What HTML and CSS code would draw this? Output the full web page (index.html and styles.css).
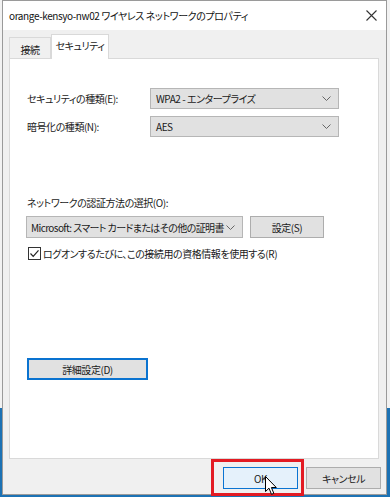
FILE: index.html
```
<!DOCTYPE html>
<html lang="ja">
<head>
<meta charset="utf-8">
<title>プロパティ</title>
<link rel="stylesheet" href="styles.css">
</head>
<body>
<div class="window">
  <div class="titlebar">
    <span class="title">orange-kensyo-nw02 ワイヤレス ネットワークのプロパティ</span>
    <svg class="close" width="11" height="11" viewBox="0 0 11 11"><path d="M0.5 0.5 L10.5 10.5 M10.5 0.5 L0.5 10.5" stroke="#333" stroke-width="1.1" fill="none"/></svg>
  </div>
  <div class="body">
    <div class="tabs">
      <div class="tab">接続</div>
      <div class="tab active">セキュリティ</div>
    </div>
    <div class="panel">
      <div class="row">
        <span class="label">セキュリティの種類(E):</span>
        <div class="select"><span>WPA2 - エンタープライズ</span><svg class="chev" width="9" height="5" viewBox="0 0 9 5"><path d="M0.5 0.5 L4.5 4.5 L8.5 0.5" stroke="#666" fill="none"/></svg></div>
      </div>
      <div class="row">
        <span class="label">暗号化の種類(N):</span>
        <div class="select"><span>AES</span><svg class="chev" width="9" height="5" viewBox="0 0 9 5"><path d="M0.5 0.5 L4.5 4.5 L8.5 0.5" stroke="#666" fill="none"/></svg></div>
      </div>
      <div class="auth-label">ネットワークの認証方法の選択(O):</div>
      <div class="auth-row">
        <div class="select combo"><span class="combo-text">Microsoft: スマート カードまたはその他の証明書</span><svg class="chev" width="9" height="5" viewBox="0 0 9 5"><path d="M0.5 0.5 L4.5 4.5 L8.5 0.5" stroke="#666" fill="none"/></svg></div>
        <div class="btn settings">設定(S)</div>
      </div>
      <div class="check-row">
        <svg class="checkbox" width="13" height="13" viewBox="0 0 13 13"><rect x="0.5" y="0.5" width="12" height="12" fill="#fff" stroke="#333"/><path d="M2.5 6.5 L5.2 9.3 L10.5 3.3" stroke="#222" stroke-width="1.2" fill="none"/></svg>
        <span>ログオンするたびに、この接続用の資格情報を使用する(R)</span>
      </div>
      <div class="btn advanced">詳細設定(D)</div>
    </div>
    <div class="footer">
      <div class="btn ok">OK</div>
      <div class="btn cancel">キャンセル</div>
    </div>
  </div>
  <div class="highlight"></div>
  <svg class="cursor" width="13" height="20" viewBox="0 0 13 20"><path d="M0.5 0.5 L0.5 15.5 L4 12.2 L6.5 18.3 L8.8 17.3 L6.4 11.5 L11.3 11.5 Z" fill="#fff" stroke="#000" stroke-width="1" stroke-linejoin="round"/></svg>
</div>
</body>
</html>
```
FILE: styles.css
```
* { box-sizing: border-box; }
html, body { margin: 0; padding: 0; }
body {
  width: 390px;
  height: 497px;
  overflow: hidden;
  background: linear-gradient(#f2f2f2 0, #f2f2f2 408px, #1c72b4 408px);
  font-family: "Noto Sans CJK JP", sans-serif;
  font-size: 10px;
  letter-spacing: -0.45px;
  color: #1a1a1a;
  font-feature-settings: "palt";
}
.window {
  position: relative;
  margin-left: 2px;
  width: 385px;
  height: 495px;
  border: 1px solid #9a9a9a;
  background: #f0f0f0;
  display: flex;
  flex-direction: column;
}
.titlebar {
  height: 29px;
  background: #fff;
  display: flex;
  align-items: center;
  justify-content: space-between;
  padding: 0 7px 0 6px;
}
.title { font-size: 10px; letter-spacing: -0.4px; color: #111; }
.close { margin-right: 2px; }
.body { flex: 1; display: flex; flex-direction: column; }
.tabs {
  display: flex;
  align-items: flex-end;
  padding: 3px 0 0 6px;
  height: 28px;
}
.tab {
  height: 21px;
  width: 42px;
  border: 1px solid #d9d9d9;
  border-bottom: none;
  background: #f0f0f0;
  display: flex;
  align-items: center;
  justify-content: center;
  padding-top: 2px;
}
.tab.active {
  width: 58px;
  height: 25px;
  background: #fff;
  margin-bottom: -1px;
  position: relative;
  z-index: 1;
  padding: 0 0 4px;
}
.panel {
  margin-left: 6px;
  width: 370px;
  height: 401px;
  background: #fff;
  border: 1px solid #d9d9d9;
  padding: 29px 0 0 17px;
  display: flex;
  flex-direction: column;
}
.row {
  display: flex;
  align-items: center;
  margin-bottom: 7px;
}
.label { width: 123px; }
.select {
  width: 189px;
  height: 21px;
  background: #e1e1e1;
  border: 1px solid #b6b6b6;
  display: flex;
  align-items: center;
  justify-content: space-between;
  padding: 0 7px 0 5px;
}
.chev { flex: none; }
.auth-label { margin-top: 51px; height: 15px; line-height: 15px; }
.auth-row {
  display: flex;
  gap: 7px;
  margin-top: 6px;
  margin-left: -1px;
}
.combo { width: 217px; height: 22px; white-space: nowrap; padding-left: 4px; }
.combo-text { letter-spacing: -0.6px; }
.btn {
  height: 22px;
  background: #e1e1e1;
  border: 1px solid #adadad;
  display: flex;
  align-items: center;
  justify-content: center;
}
.settings { width: 74px; }
.check-row {
  display: flex;
  align-items: center;
  gap: 2px;
  margin-top: 8px;
  margin-left: 1px;
}
.advanced {
  margin-top: 97px;
  width: 121px;
  border: 2px solid #0a73d0;
}
.footer {
  display: flex;
  justify-content: flex-end;
  gap: 8px;
  padding: 8px 5px 0 0;
}
.ok { width: 75px; background: #e5f1fb; border-color: #0a74d2; }
.cancel { width: 75px; }
.highlight {
  position: absolute;
  left: 208px;
  top: 458px;
  width: 93px;
  height: 37px;
  border: 3px solid #e31b23;
}
.cursor {
  position: absolute;
  left: 262px;
  top: 475px;
}
```
